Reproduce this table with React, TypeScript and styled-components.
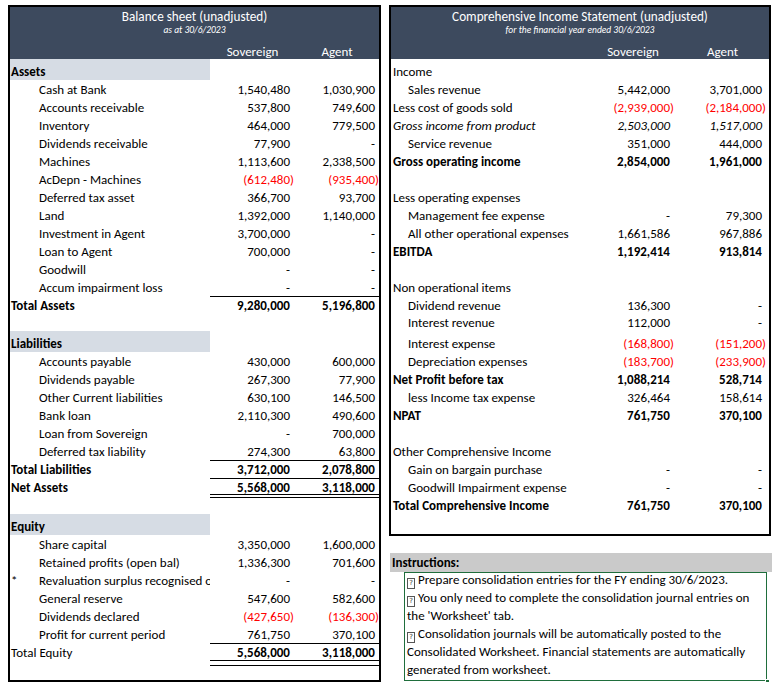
import React from "react";
import styled, { createGlobalStyle } from "styled-components";

const FONT = `"Carlito", "Lato", "Liberation Sans", sans-serif`;

const GlobalStyle = createGlobalStyle`
  html, body { margin: 0; padding: 0; background: #ffffff; }
  body { font-family: ${FONT}; font-size: 13px; color: #000; }
  * { box-sizing: border-box; }
`;

type V = number | null;

const withCommas = (n: number) =>
  String(Math.abs(n)).replace(/\B(?=(\d{3})+(?!\d))/g, ",");

const Page = styled.div`
  display: flex;
  align-items: flex-start;
  gap: 8px;
  padding: 5px 0 0 8px;
`;

const Panel = styled.section<{ $w: number; $h: number }>`
  width: ${(p) => p.$w}px;
  height: ${(p) => p.$h}px;
  border: 2px solid #000;
  display: flex;
  flex-direction: column;
  overflow: hidden;
`;

const RightColumn = styled.div`
  display: flex;
  flex-direction: column;
`;

const Header = styled.header`
  height: 52px;
  flex: none;
  background: #3d4a5e;
  color: #fff;
  display: flex;
  flex-direction: column;
`;

const Title = styled.div`
  text-align: center;
  font-size: 13.2px;
  line-height: 17px;
  padding-top: 1px;
`;

const Subtitle = styled.div`
  text-align: center;
  font-size: 9.5px;
  font-style: italic;
  line-height: 10px;
`;

const HeadRow = styled.div<{ $cols: string }>`
  margin-top: auto;
  display: grid;
  grid-template-columns: ${(p) => p.$cols};
  height: 15px;
  line-height: 15px;
  font-size: 13px;
`;

const HeadCell = styled.div`
  text-align: center;
`;

const Row = styled.div<{ $cols: string; $h?: number }>`
  display: grid;
  flex: none;
  grid-template-columns: ${(p) => p.$cols};
  height: ${(p) => p.$h ?? 18}px;
  align-items: end;
`;

const Label = styled.div<{
  $indent: number;
  $bold?: boolean;
  $italic?: boolean;
  $fill?: boolean;
}>`
  height: 100%;
  display: flex;
  align-items: flex-end;
  padding-left: ${(p) => p.$indent}px;
  line-height: 16px;
  white-space: nowrap;
  overflow: hidden;
  font-weight: ${(p) => (p.$bold ? 700 : 400)};
  font-style: ${(p) => (p.$italic ? "italic" : "normal")};
  background: ${(p) => (p.$fill ? "#d6dce4" : "transparent")};
`;

const Marker = styled.span`
  display: inline-block;
  width: 28px;
  flex: none;
`;

const NumCell = styled.div<{
  $bold?: boolean;
  $italic?: boolean;
  $pad: number;
  $top?: boolean;
  $bottom?: "thick" | "double";
}>`
  position: relative;
  height: 100%;
  display: flex;
  align-items: flex-end;
  justify-content: flex-end;
  padding-right: ${(p) => p.$pad}px;
  line-height: 16px;
  white-space: nowrap;
  font-weight: ${(p) => (p.$bold ? 700 : 400)};
  font-style: ${(p) => (p.$italic ? "italic" : "normal")};
  border-top: ${(p) => (p.$top ? "1px solid #000" : "0")};

  &::after {
    content: "";
    display: ${(p) => (p.$bottom ? "block" : "none")};
    position: absolute;
    left: 0;
    right: 0;
    bottom: ${(p) => (p.$bottom === "double" ? "-5px" : "-2px")};
    height: ${(p) => (p.$bottom === "double" ? "4px" : "2px")};
    border-top: 1px solid #000;
    border-bottom: 1px solid #000;
  }
`;

const Neg = styled.span`
  color: #ff0000;
`;

const Pad = styled.span`
  visibility: hidden;
`;

const Num: React.FC<{ v: V }> = ({ v }) => {
  if (v === null)
    return (
      <span>
        -<Pad>)</Pad>
      </span>
    );
  if (v < 0) return <Neg>({withCommas(v)})</Neg>;
  return (
    <span>
      {withCommas(v)}
      <Pad>)</Pad>
    </span>
  );
};

/* ---------- data ---------- */

type Line = {
  kind: "section" | "item" | "total" | "blank";
  label?: string;
  sov?: V;
  agt?: V;
  bold?: boolean;
  boldNums?: boolean;
  italic?: boolean;
  top?: boolean;
  bottom?: "thick" | "double";
  h?: number;
  star?: boolean;
  flush?: boolean;
};

const balance: Line[] = [
  { kind: "section", label: "Assets", h: 21 },
  { kind: "item", label: "Cash at Bank", sov: 1540480, agt: 1030900 },
  { kind: "item", label: "Accounts receivable", sov: 537800, agt: 749600 },
  { kind: "item", label: "Inventory", sov: 464000, agt: 779500 },
  { kind: "item", label: "Dividends receivable", sov: 77900, agt: null },
  { kind: "item", label: "Machines", sov: 1113600, agt: 2338500 },
  { kind: "item", label: "AcDepn - Machines", sov: -612480, agt: -935400 },
  { kind: "item", label: "Deferred tax asset", sov: 366700, agt: 93700 },
  { kind: "item", label: "Land", sov: 1392000, agt: 1140000 },
  { kind: "item", label: "Investment in Agent", sov: 3700000, agt: null },
  { kind: "item", label: "Loan to Agent", sov: 700000, agt: null },
  { kind: "item", label: "Goodwill", sov: null, agt: null },
  { kind: "item", label: "Accum impairment loss", sov: null, agt: null },
  { kind: "total", label: "Total Assets", sov: 9280000, agt: 5196800, bold: true, boldNums: true, top: true },
  { kind: "blank", h: 17 },
  { kind: "section", label: "Liabilities", h: 21 },
  { kind: "item", label: "Accounts payable", sov: 430000, agt: 600000 },
  { kind: "item", label: "Dividends payable", sov: 267300, agt: 77900 },
  { kind: "item", label: "Other Current liabilities", sov: 630100, agt: 146500 },
  { kind: "item", label: "Bank loan", sov: 2110300, agt: 490600 },
  { kind: "item", label: "Loan from Sovereign", sov: null, agt: 700000 },
  { kind: "item", label: "Deferred tax liability", sov: 274300, agt: 63800 },
  { kind: "total", label: "Total Liabilities", sov: 3712000, agt: 2078800, bold: true, boldNums: true, top: true },
  { kind: "total", label: "Net Assets", sov: 5568000, agt: 3118000, bold: true, boldNums: true, top: true, bottom: "thick" },
  { kind: "blank", h: 18 },
  { kind: "section", label: "Equity", h: 21 },
  { kind: "item", label: "Share capital", sov: 3350000, agt: 1600000 },
  { kind: "item", label: "Retained profits (open bal)", sov: 1336300, agt: 701600 },
  { kind: "item", label: "Revaluation surplus recognised on acquisition", sov: null, agt: null, star: true },
  { kind: "item", label: "General reserve", sov: 547600, agt: 582600 },
  { kind: "item", label: "Dividends declared", sov: -427650, agt: -136300 },
  { kind: "item", label: "Profit for current period", sov: 761750, agt: 370100 },
  { kind: "total", label: "Total Equity", sov: 5568000, agt: 3118000, boldNums: true, top: true, bottom: "double" },
];

const income: Line[] = [
  { kind: "section", label: "Income", h: 21 },
  { kind: "item", label: "Sales revenue", sov: 5442000, agt: 3701000 },
  { kind: "item", label: "Less cost of goods sold", sov: -2939000, agt: -2184000, flush: true },
  { kind: "item", label: "Gross income from product", sov: 2503000, agt: 1517000, flush: true, italic: true },
  { kind: "item", label: "Service revenue", sov: 351000, agt: 444000 },
  { kind: "total", label: "Gross operating income", sov: 2854000, agt: 1961000, bold: true, boldNums: true },
  { kind: "blank" },
  { kind: "section", label: "Less operating expenses" },
  { kind: "item", label: "Management fee expense", sov: null, agt: 79300 },
  { kind: "item", label: "All other operational expenses", sov: 1661586, agt: 967886 },
  { kind: "total", label: "EBITDA", sov: 1192414, agt: 913814, bold: true, boldNums: true },
  { kind: "blank" },
  { kind: "section", label: "Non operational items" },
  { kind: "item", label: "Dividend revenue", sov: 136300, agt: null },
  { kind: "item", label: "Interest revenue", sov: 112000, agt: null, h: 17 },
  { kind: "item", label: "Interest expense", sov: -168800, agt: -151200, h: 21 },
  { kind: "item", label: "Depreciation expenses", sov: -183700, agt: -233900 },
  { kind: "total", label: "Net Profit before tax", sov: 1088214, agt: 528714, bold: true, boldNums: true },
  { kind: "item", label: "less Income tax expense", sov: 326464, agt: 158614 },
  { kind: "total", label: "NPAT", sov: 761750, agt: 370100, bold: true, boldNums: true },
  { kind: "blank" },
  { kind: "section", label: "Other Comprehensive Income" },
  { kind: "item", label: "Gain on bargain purchase", sov: null, agt: null },
  { kind: "item", label: "Goodwill Impairment expense", sov: null, agt: null },
  { kind: "total", label: "Total Comprehensive Income", sov: 761750, agt: 370100, bold: true, boldNums: true },
];

type Layout = {
  cols: string;
  headIndent: number;
  itemIndent: number;
  padSov: number;
  padAgt: number;
  fillSections: boolean;
  boldSections: boolean;
};

const Statement: React.FC<{ lines: Line[]; layout: Layout }> = ({ lines, layout }) => (
  <>
    {lines.map((l, i) => {
      if (l.kind === "blank")
        return <Row key={i} $cols={layout.cols} $h={l.h} />;
      if (l.kind === "section")
        return (
          <Row key={i} $cols={layout.cols} $h={l.h}>
            <Label
              $indent={layout.headIndent}
              $bold={layout.boldSections}
              $fill={layout.fillSections}
            >
              {l.label}
            </Label>
          </Row>
        );
      const indent =
        l.kind === "total" || l.flush ? layout.headIndent : layout.itemIndent;
      return (
        <Row key={i} $cols={layout.cols} $h={l.h}>
          <Label
            $indent={l.star ? layout.headIndent : indent}
            $bold={l.bold}
            $italic={l.italic}
          >
            {l.star && <Marker>*</Marker>}
            {l.label}
          </Label>
          <NumCell
            $pad={layout.padSov}
            $bold={l.boldNums}
            $italic={l.italic}
            $top={l.top}
            $bottom={l.bottom}
          >
            <Num v={l.sov ?? null} />
          </NumCell>
          <NumCell
            $pad={layout.padAgt}
            $bold={l.boldNums}
            $italic={l.italic}
            $top={l.top}
            $bottom={l.bottom}
          >
            <Num v={l.agt ?? null} />
          </NumCell>
        </Row>
      );
    })}
  </>
);

const leftLayout: Layout = {
  cols: "200px 85px 84px",
  headIndent: 1,
  itemIndent: 29,
  padSov: 1,
  padAgt: 0,
  fillSections: true,
  boldSections: true,
};

const rightLayout: Layout = {
  cols: "199px 86px 93px",
  headIndent: 2,
  itemIndent: 17,
  padSov: 2,
  padAgt: 3,
  fillSections: false,
  boldSections: false,
};

/* ---------- instructions ---------- */

const InstructionsBar = styled.div`
  margin-top: 17px;
  margin-left: 1px;
  width: 382px;
  height: 19px;
  background: #cacaca;
  padding-left: 2px;
  line-height: 20px;
  font-weight: 600;
`;

const NoteBox = styled.div`
  position: relative;
  margin-left: 15px;
  width: 363px;
  height: 109px;
  border: 1px solid #1f6e3c;
`;

const NoteText = styled.div`
  margin-top: -2px;
  padding-left: 2px;
  line-height: 18px;
`;

const Handle = styled.span`
  position: absolute;
  right: -4px;
  bottom: -4px;
  width: 5px;
  height: 5px;
  background: #1f6e3c;
  border: 1px solid #fff;
`;

const Glyph = styled.span`
  display: inline-block;
  width: 8px;
  height: 11px;
  border: 1px solid #555;
  color: #333;
  font-size: 7px;
  line-height: 9px;
  text-align: center;
  vertical-align: -1px;
  margin-right: 3px;
  font-family: "DejaVu Sans", sans-serif;
`;

export default function App() {
  return (
    <>
      <GlobalStyle />
      <Page>
        <Panel $w={373} $h={677}>
          <Header>
            <Title>Balance sheet (unadjusted)</Title>
            <Subtitle>as at 30/6/2023</Subtitle>
            <HeadRow $cols={leftLayout.cols}>
              <HeadCell />
              <HeadCell>Sovereign</HeadCell>
              <HeadCell>Agent</HeadCell>
            </HeadRow>
          </Header>
          <Statement lines={balance} layout={leftLayout} />
        </Panel>
        <RightColumn>
          <Panel $w={382} $h={531}>
            <Header>
              <Title>Comprehensive Income Statement (unadjusted)</Title>
              <Subtitle>for the financial year ended 30/6/2023</Subtitle>
              <HeadRow $cols={rightLayout.cols}>
                <HeadCell />
                <HeadCell>Sovereign</HeadCell>
                <HeadCell>Agent</HeadCell>
              </HeadRow>
            </Header>
            <Statement lines={income} layout={rightLayout} />
          </Panel>
          <InstructionsBar>Instructions:</InstructionsBar>
          <NoteBox>
            <NoteText>
              <Glyph>?</Glyph>Prepare consolidation entries for the FY ending 30/6/2023.
              <br />
              <Glyph>?</Glyph>You only need to complete the consolidation journal entries on
              the 'Worksheet' tab.
              <br />
              <Glyph>?</Glyph>Consolidation journals will be automatically posted to the
              Consolidated Worksheet. Financial statements are automatically generated
              from worksheet.
            </NoteText>
            <Handle />
          </NoteBox>
        </RightColumn>
      </Page>
    </>
  );
}
